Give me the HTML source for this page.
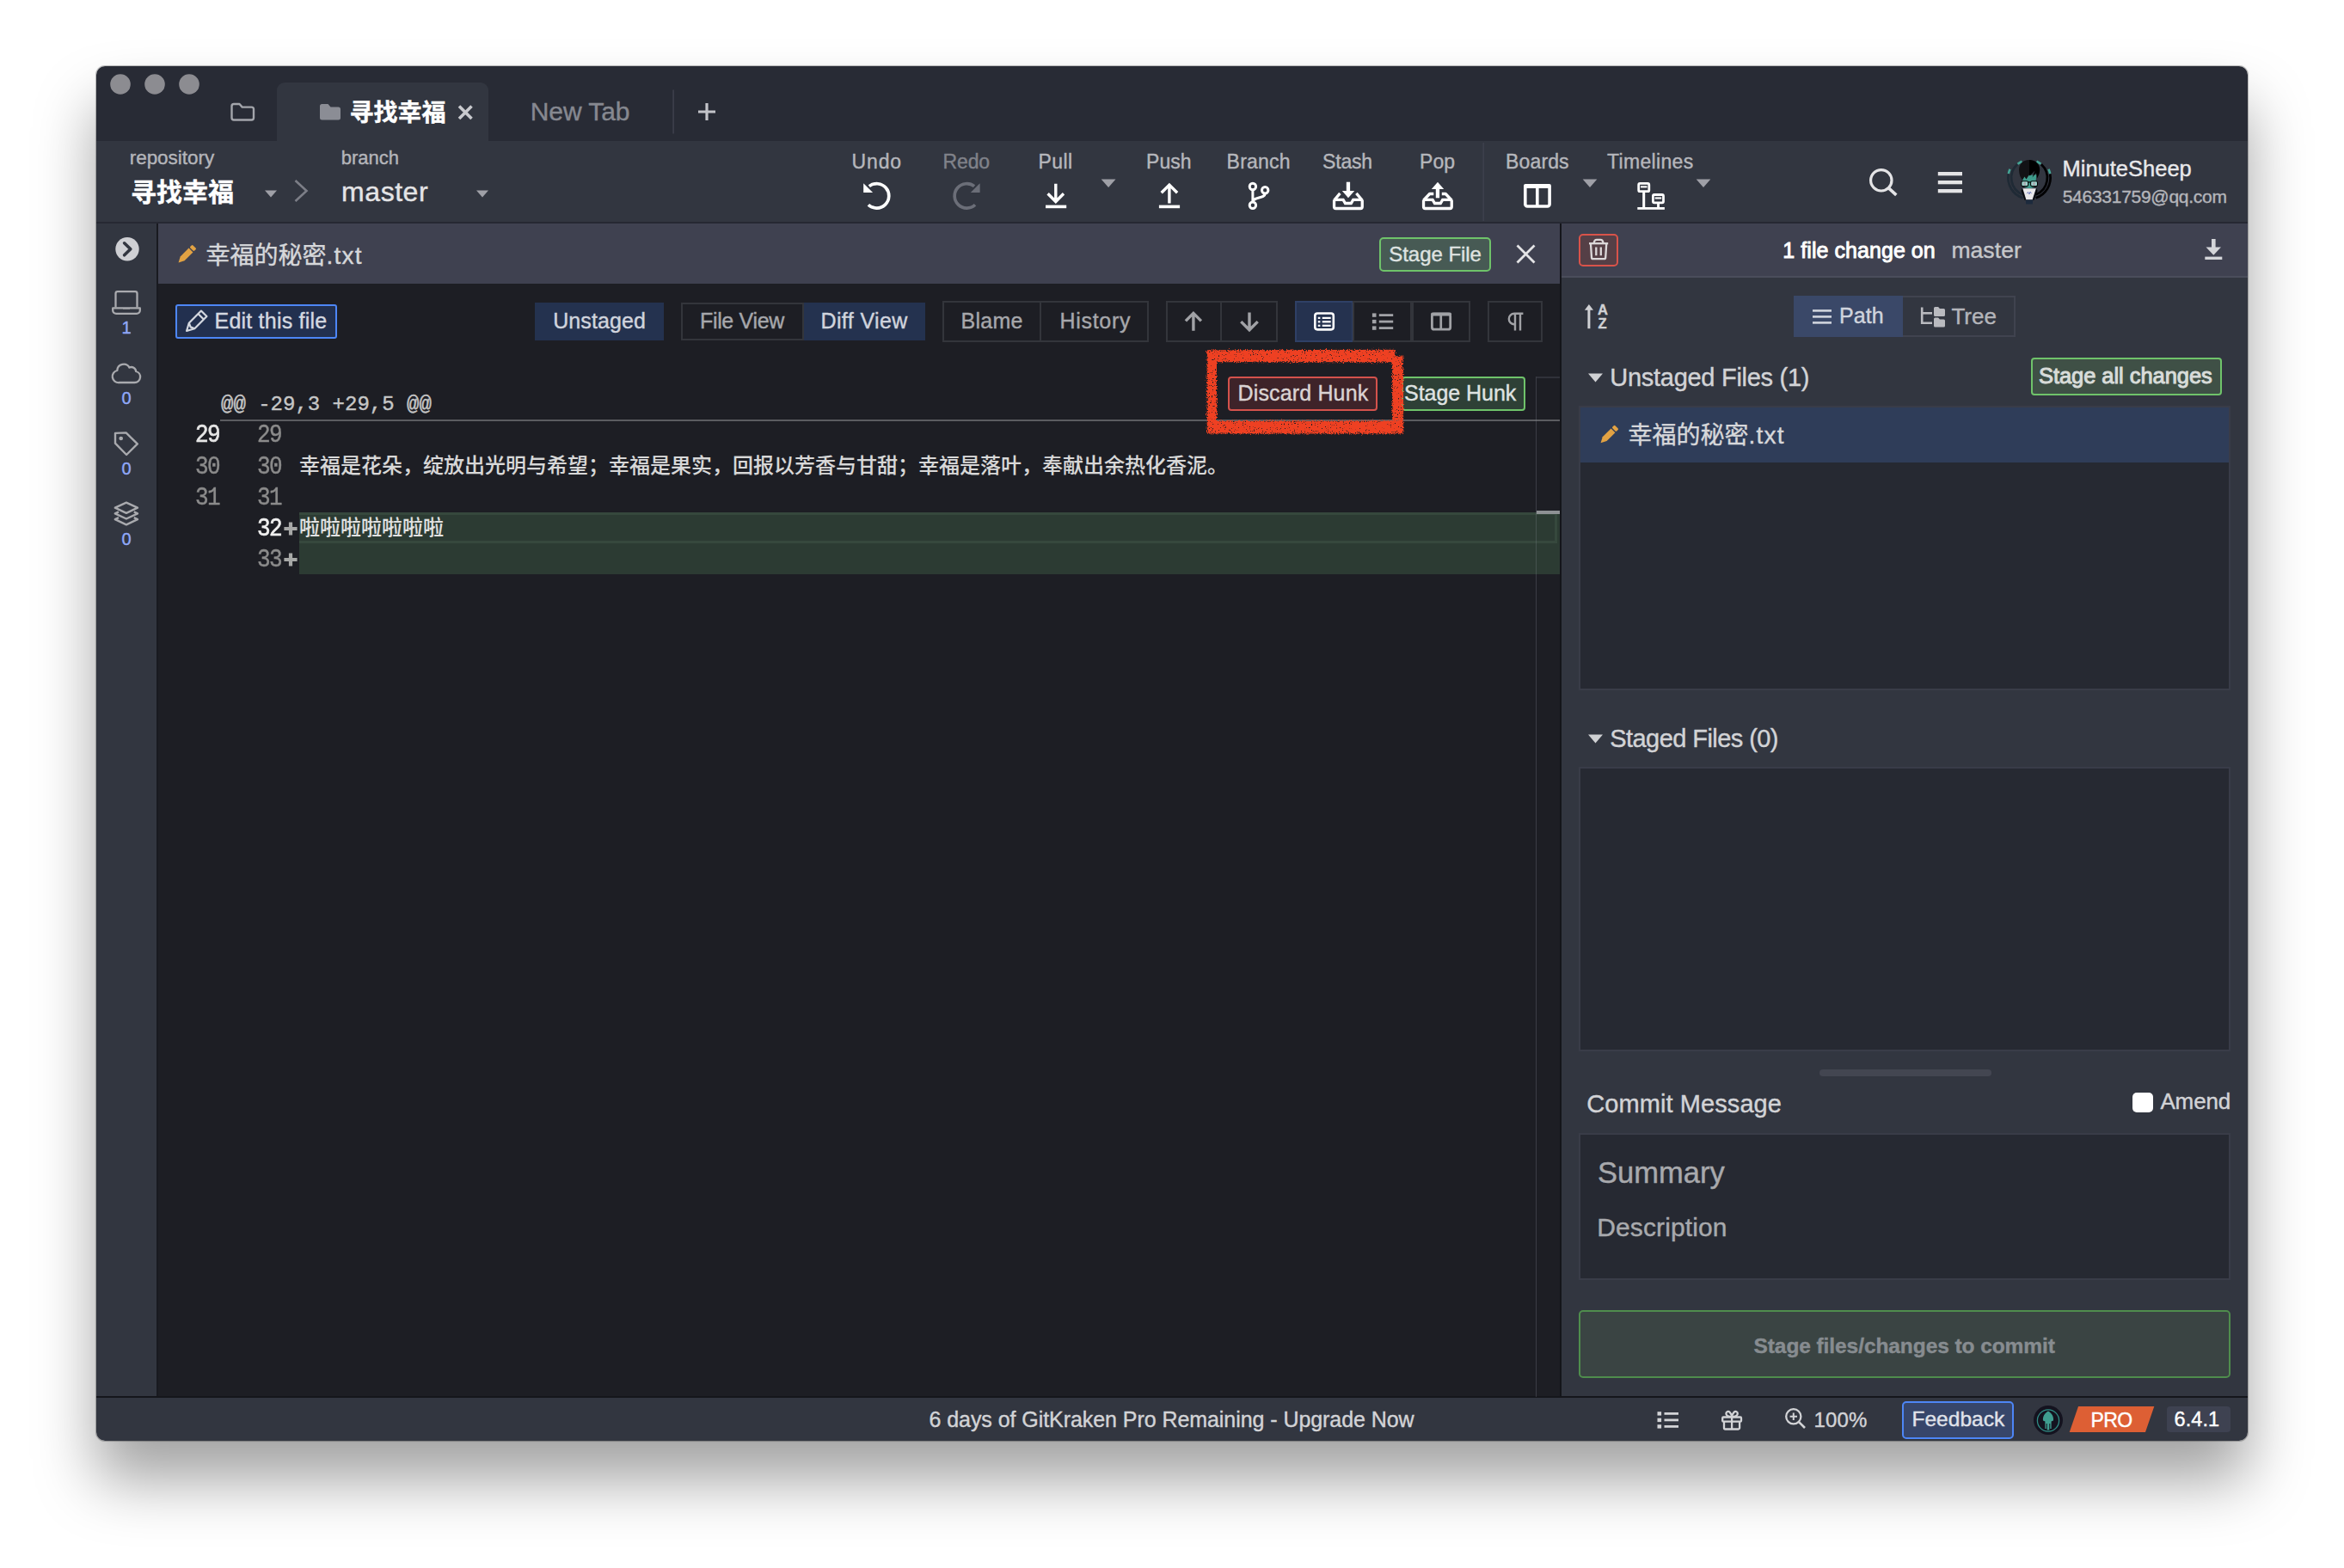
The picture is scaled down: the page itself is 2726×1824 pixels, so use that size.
<!DOCTYPE html>
<html lang="zh">
<head>
<meta charset="utf-8">
<title>GitKraken - 寻找幸福</title>
<style>
html,body{margin:0;padding:0;}
body{width:2726px;height:1824px;background:#fff;overflow:hidden;position:relative;
 font-family:"Liberation Sans","Noto Sans CJK SC",sans-serif;}
.abs,.win *{position:absolute;box-sizing:border-box;}
.shadow{left:112px;top:77px;width:2502px;height:1599px;border-radius:10px;
 box-shadow:0 0 0 1px rgba(0,0,0,.22),0 0 3px rgba(0,0,0,.10),0 46px 70px rgba(0,0,0,.365);}
.win{left:0;top:0;width:2726px;height:1824px;clip-path:inset(77px 112px 148px 112px round 10px);}
.t{white-space:pre;line-height:1;-webkit-text-stroke:0.4px;}
svg{overflow:visible;}
/* panels */
.tabbar{left:112px;top:77px;width:2502px;height:87px;background:#282b35;}
.tab{left:322px;top:96px;width:246px;height:68px;background:#323640;border-radius:9px 9px 0 0;}
.toolbar{left:112px;top:164px;width:2502px;height:94px;background:#323640;}
.tbline{left:112px;top:258px;width:2502px;height:2px;background:#262832;}
.side{left:112px;top:260px;width:70px;height:1365px;background:#323640;}
.sideline{left:182px;top:260px;width:2px;height:1365px;background:#191a20;}
.fhead{left:184px;top:260px;width:1630px;height:70px;background:#3f4150;}
.diff{left:184px;top:330px;width:1630px;height:1295px;background:#1d1e24;}
.midline{left:1814px;top:260px;width:2px;height:1365px;background:#14151a;}
.right{left:1816px;top:260px;width:798px;height:1365px;background:#323640;}
.rhead{left:1816px;top:260px;width:798px;height:61px;background:#3f4150;}
.rheadline{left:1816px;top:321px;width:798px;height:2px;background:#4a4d5b;}
.status{left:112px;top:1626px;width:2502px;height:50px;background:#323640;}
.statusline{left:112px;top:1624px;width:2502px;height:2px;background:#15161b;}
</style>
</head>
<body>
<div class="abs shadow"></div>
<div class="abs win">
<!-- backgrounds -->
<div class="tabbar"></div>
<div class="tab"></div>
<div class="toolbar"></div>
<div class="tbline"></div>
<div class="side"></div>
<div class="sideline"></div>
<div class="fhead"></div>
<div class="diff"></div>
<div class="midline"></div>
<div class="right"></div>
<div class="rhead"></div>
<div class="rheadline"></div>
<div class="statusline"></div>
<div class="status"></div>
<!-- tab bar -->
<svg style="left:112px;top:77px" width="2502" height="87" viewBox="112 77 2502 87" ><circle cx="140" cy="98" r="11.8" fill="#8c8c91"/><circle cx="180" cy="98" r="11.8" fill="#8c8c91"/><circle cx="220" cy="98" r="11.8" fill="#8c8c91"/><path d="M269.5 123.5 a2.5 2.5 0 0 1 2.5 -2.5 h6.5 l3.2 3.6 h10.8 a2.5 2.5 0 0 1 2.5 2.5 v9.9 a2.5 2.5 0 0 1 -2.5 2.5 h-20.5 a2.5 2.5 0 0 1 -2.5 -2.5 z" fill="none" stroke="#a3a5ab" stroke-width="2.4" stroke-linejoin="round"/><path d="M372 123.5 a2.5 2.5 0 0 1 2.5 -2.5 h7 l3 3.5 h9 a2.5 2.5 0 0 1 2.5 2.5 v10 a2.5 2.5 0 0 1 -2.5 2.5 h-19 a2.5 2.5 0 0 1 -2.5 -2.5 z" fill="#8b8d95"/><path d="M534 123.5 L548.5 138 M548.5 123.5 L534 138" stroke="#c9cace" stroke-width="3.6" fill="none"/><rect x="782.3" y="104.5" width="1.6" height="51" fill="#3d404c"/><path d="M822 120 V140 M812 130 H832" stroke="#c3c4c9" stroke-width="3.2" fill="none"/></svg>
<span class="t" style="left:406.5px;top:117.6px;font-size:28px;color:#ffffff;font-weight:700;">寻找幸福</span>
<span class="t" style="left:616.7px;top:114.6px;font-size:30.0px;color:#868890;letter-spacing:-0.06px;">New Tab</span>
<!-- toolbar -->
<span class="t" style="left:150.7px;top:173.0px;font-size:22.5px;color:#b4b5ba;letter-spacing:-0.03px;">repository</span>
<span class="t" style="left:152.0px;top:208.6px;font-size:30px;color:#ffffff;font-weight:700;">寻找幸福</span>
<span class="t" style="left:396.7px;top:173.4px;font-size:22.0px;color:#b4b5ba;letter-spacing:0.03px;">branch</span>
<span class="t" style="left:397.1px;top:206.9px;font-size:32.0px;color:#e4e4e6;letter-spacing:0.54px;">master</span>
<span class="t" style="left:990.6px;top:176.5px;font-size:23.0px;color:#b6b7bc;letter-spacing:0.85px;">Undo</span>
<span class="t" style="left:1096.6px;top:176.5px;font-size:23.0px;color:#80828a;letter-spacing:-0.15px;">Redo</span>
<span class="t" style="left:1207.6px;top:176.5px;font-size:23.0px;color:#b6b7bc;letter-spacing:0.39px;">Pull</span>
<span class="t" style="left:1333.1px;top:176.5px;font-size:23.0px;color:#b6b7bc;letter-spacing:0.03px;">Push</span>
<span class="t" style="left:1426.6px;top:176.5px;font-size:23.0px;color:#b6b7bc;letter-spacing:0.23px;">Branch</span>
<span class="t" style="left:1538.1px;top:176.5px;font-size:23.0px;color:#b6b7bc;letter-spacing:-0.20px;">Stash</span>
<span class="t" style="left:1651.1px;top:176.5px;font-size:23.0px;color:#b6b7bc;letter-spacing:0.05px;">Pop</span>
<span class="t" style="left:1751.1px;top:176.5px;font-size:23.0px;color:#b6b7bc;letter-spacing:0.13px;">Boards</span>
<span class="t" style="left:1869.1px;top:176.5px;font-size:23.0px;color:#b6b7bc;letter-spacing:0.31px;">Timelines</span>
<span class="t" style="left:2398.5px;top:184.4px;font-size:25.5px;color:#e8e8ea;">MinuteSheep</span>
<span class="t" style="left:2398.7px;top:218.2px;font-size:21.0px;color:#b4b5ba;letter-spacing:-0.27px;">546331759@qq.com</span>
<svg style="left:112px;top:164px" width="2502" height="94" viewBox="112 164 2502 94" ><polygon points="308,221.5 322,221.5 315.0,229.5" fill="#9fa0a7"/><polygon points="554,221.5 568,221.5 561.0,229.5" fill="#9fa0a7"/><path d="M343.5 210 L356.5 222 L343.5 234" fill="none" stroke="#7c7e87" stroke-width="2.6"/><path d="M1010.81 216.66 A14.2 14.2 0 1 1 1009.87 238.24" fill="none" stroke="#ffffff" stroke-width="3.7"/><polygon points="1004.2,213.2 1004.2,224.1 1015.1,224.1" fill="#ffffff"/><path d="M1133.09 216.66 A14.2 14.2 0 1 0 1134.03 238.24" fill="none" stroke="#6b6e78" stroke-width="3.7"/><polygon points="1139.6,213.2 1139.6,224.1 1128.8,224.1" fill="#6b6e78"/><path d="M1227.8 213.8 V234 M1218.6 225.3 L1227.8 234.5 L1237 225.3" fill="none" stroke="#ffffff" stroke-width="3.4"/><rect x="1216" y="238.6" width="24.2" height="3.6" fill="#ffffff"/><polygon points="1280.7,208.6 1297.5,208.6 1289.1,218" fill="#9fa0a7"/><path d="M1359.9 236.4 V215.5 M1350.7 224.3 L1359.9 215.1 L1369.1 224.3" fill="none" stroke="#ffffff" stroke-width="3.4"/><rect x="1347.9" y="238.6" width="24.2" height="3.6" fill="#ffffff"/><g fill="none" stroke="#ffffff" stroke-width="3"><circle cx="1456.9" cy="217" r="3.7"/><circle cx="1471.2" cy="221.3" r="3.7"/><circle cx="1456.9" cy="238.8" r="3.7"/><path d="M1456.9 220.7 V235.1 M1471.2 225 C1471.2 231.5 1457.2 228.5 1456.9 235"/></g><g fill="none" stroke="#ffffff" stroke-width="3.3" stroke-linejoin="round"><path d="M1551.5500000000002 232.6 V240.5 a2 2 0 0 0 2 2 H1582.25 a2 2 0 0 0 2 -2 V232.6"/><path d="M1551.5500000000002 232.4 H1562.1000000000001 L1564.5 236.5 H1571.3000000000002 L1573.7 232.4 H1584.25" stroke-linejoin="miter"/><path d="M1551.5500000000002 233 L1558.4 224.9 M1584.25 233 L1577.4 224.9"/></g><rect x="1565.8" y="211.7" width="4.3" height="11" fill="#ffffff"/><polygon points="1560.8,222.1 1575.2,222.1 1568,230.3" fill="#ffffff"/><g fill="none" stroke="#ffffff" stroke-width="3.3" stroke-linejoin="round"><path d="M1655.5500000000002 232.6 V240.5 a2 2 0 0 0 2 2 H1686.25 a2 2 0 0 0 2 -2 V232.6"/><path d="M1655.5500000000002 232.4 H1666.1000000000001 L1668.5 236.5 H1675.3000000000002 L1677.7 232.4 H1688.25" stroke-linejoin="miter"/><path d="M1655.5500000000002 233 L1662.6000000000001 225.5 H1667.3000000000002 M1688.25 233 L1681.2 225.5 H1676.8000000000002"/></g><rect x="1669.8" y="219" width="4.3" height="11.3" fill="#ffffff"/><polygon points="1664.8,219.9 1679.2,219.9 1672,211.7" fill="#ffffff"/><rect x="1724.4" y="166" width="1.6" height="91" fill="#3d404c"/><rect x="1773.8" y="216" width="28.3" height="24" rx="2.5" fill="none" stroke="#ffffff" stroke-width="3.6"/><rect x="1772" y="214" width="31.9" height="5" rx="2" fill="#ffffff"/><rect x="1786" y="216" width="3.6" height="24" fill="#ffffff"/><polygon points="1840.7,208.6 1857.3,208.6 1849.0,218" fill="#9fa0a7"/><g fill="none" stroke="#ffffff" stroke-width="2.8"><rect x="1905.7" y="213.4" width="12.1" height="9.3" rx="1.5"/><rect x="1922.4" y="226.5" width="12.1" height="9.3" rx="1.5"/></g><g fill="#ffffff"><rect x="1908" y="216.3" width="7.5" height="2.1"/><rect x="1924.7" y="229.4" width="7.5" height="2.1"/><rect x="1910.2" y="224" width="3" height="17.5"/><rect x="1927.1" y="237" width="2.9" height="4.5"/><rect x="1904.3" y="241" width="31.6" height="2.8"/></g><polygon points="1972.7,208.6 1989.3,208.6 1981.0,218" fill="#9fa0a7"/><circle cx="2187.8" cy="209.8" r="12.2" fill="none" stroke="#e4e4e6" stroke-width="3.2"/><path d="M2196.8 219.2 L2205.3 226.9" stroke="#e4e4e6" stroke-width="3.6" fill="none"/><g fill="#e4e4e6"><rect x="2253.8" y="200" width="28.2" height="4.3"/><rect x="2253.8" y="210" width="28.2" height="4.3"/><rect x="2253.8" y="220" width="28.2" height="4.3"/></g><g><path d="M2335.77 202.53 A24.6 24.6 0 0 0 2352.40 230.20" fill="none" stroke="#1f2a35" stroke-width="2.7"/><path d="M2384.23 202.53 A24.6 24.6 0 0 1 2367.60 230.20" fill="none" stroke="#020203" stroke-width="2.7"/><path d="M2346.02 191.27 A20.9 20.9 0 0 0 2352.17 226.18" fill="none" stroke="#1f2a35" stroke-width="2.7"/><path d="M2373.98 191.27 A20.9 20.9 0 0 1 2367.83 226.18" fill="none" stroke="#020203" stroke-width="2.7"/><path d="M2335.85 202.11 A24.6 24.6 0 0 1 2337.53 196.79" fill="none" stroke="#44a596" stroke-width="2.6"/><path d="M2382.47 196.79 A24.6 24.6 0 0 1 2384.15 202.11" fill="none" stroke="#44a596" stroke-width="2.6"/><path d="M2346.57 190.79 A20.9 20.9 0 0 1 2351.50 187.71" fill="none" stroke="#44a596" stroke-width="2.6"/><path d="M2368.50 187.71 A20.9 20.9 0 0 1 2373.43 190.79" fill="none" stroke="#44a596" stroke-width="2.6"/><path d="M2351.6 205 L2353.2 216 C2355 220 2365 220 2366.8 216 L2368.6 203 Z" fill="#3f9c8c"/><path d="M2360 186 C2352 186 2348 191.5 2348 197.5 C2348 203 2350 207 2352 209.5 L2354.5 205.5 L2356.5 208.5 L2360 203 Z" fill="#121215"/><path d="M2360 186 C2368 186 2372.2 191.5 2372.2 197.5 C2372.2 201 2371 204 2369 207.5 L2368 201 L2363.5 206.5 L2366.5 198.5 L2360.5 204.5 L2360 203 Z" fill="#000"/><rect x="2350.8" y="210.8" width="7.9" height="5.8" rx="1.6" fill="#9fd8d2" stroke="#050505" stroke-width="1.1"/><rect x="2361.6" y="210.8" width="7.9" height="5.8" rx="1.6" fill="#9fd8d2" stroke="#050505" stroke-width="1.1"/><rect x="2358.4" y="211.3" width="3.4" height="1.2" fill="#050505"/><circle cx="2354.7" cy="213.7" r="1.7" fill="#a9a9ae"/><circle cx="2365.5" cy="213.7" r="1.7" fill="#a9a9ae"/><path d="M2352.4 219.3 L2367.8 219.3 L2363.6 232.3 L2356.4 232.3 Z" fill="#e9e9ea"/><path d="M2351.8 219 L2356 232.6 L2354.6 233 L2350.6 222 Z M2368.4 219 L2364 232.6 L2365.4 233 L2369.6 222 Z" fill="#07090c"/><path d="M2355.8 232.4 H2364.2 L2363.8 237.6 H2356.2 Z" fill="#1c2a3d"/><path d="M2357.2 225.2 L2358.6 223.4 L2360 226 L2361 223 L2362.6 225.2" fill="none" stroke="#4a59b0" stroke-width="0.7"/></g></svg>
<!-- sidebar -->
<svg style="left:112px;top:260px" width="70" height="400" viewBox="112 260 70 400" ><circle cx="148" cy="289.8" r="13.7" fill="#cfd0d4"/><path d="M144.6 282.8 L151.8 289.8 L144.6 296.8" fill="none" stroke="#323640" stroke-width="3.6" stroke-linecap="round" stroke-linejoin="round"/><g fill="none" stroke="#a9aaae" stroke-width="2.3" stroke-linejoin="round"><path d="M134.5 357.5 V341.5 a2.3 2.3 0 0 1 2.3 -2.3 h20.4 a2.3 2.3 0 0 1 2.3 2.3 V357.5"/><path d="M131.2 358.4 H162.8 V360.9 a3.9 3.9 0 0 1 -3.9 3.9 H135.1 a3.9 3.9 0 0 1 -3.9 -3.9 Z"/><path d="M143 358.8 H151" stroke-width="1.6"/></g><path d="M138.5 445 H156.5 a6.6 6.6 0 0 0 1.6 -13 a5.2 5.2 0 0 0 -7.6 -4.4 a7.6 7.6 0 0 0 -14.2 3.4 a7.1 7.1 0 0 0 2.2 14 Z" fill="none" stroke="#a9aaae" stroke-width="2.3" stroke-linejoin="round"/><path d="M134 503.9 L146.6 503.4 L159.8 516.4 L147.1 529 L134 515.7 Z" fill="none" stroke="#a9aaae" stroke-width="2.4" stroke-linejoin="round"/><circle cx="140.7" cy="510" r="2.3" fill="#a9aaae"/><g fill="none" stroke="#a9aaae" stroke-width="2.4" stroke-linejoin="round"><path d="M146.9 584.6 L160 590.7 L146.9 596.8 L133.8 590.7 Z"/><path d="M138 595.4 L133.8 597.4 L146.9 603.5 L160 597.4 L155.8 595.4"/><path d="M138 602.2 L133.8 604.2 L146.9 610.3 L160 604.2 L155.8 602.2"/></g></svg>
<span class="t" style="left:127px;width:40px;text-align:center;top:371.1px;font-size:20px;color:#90a8f8">1</span>
<span class="t" style="left:127px;width:40px;text-align:center;top:452.9px;font-size:20px;color:#90a8f8">0</span>
<span class="t" style="left:127px;width:40px;text-align:center;top:535.3px;font-size:20px;color:#90a8f8">0</span>
<span class="t" style="left:127px;width:40px;text-align:center;top:617.1px;font-size:20px;color:#90a8f8">0</span>
<!-- file header -->
<svg style="left:184px;top:260px" width="1630" height="70" viewBox="184 260 1630 70" ><g transform="translate(217 296) scale(0.9545454545454546) rotate(45)"><rect x="-3.6" y="-13.4" width="7.2" height="4.6" rx="1.3" fill="#e2a243"/><path d="M-3.6 -7.4 H3.6 V7.2 L0 14 L-3.6 7.2 Z" fill="#e2a243"/></g><path d="M1764.5 285.5 L1784.5 305.5 M1784.5 285.5 L1764.5 305.5" stroke="#e4e4e6" stroke-width="2.8" fill="none"/></svg>
<span class="t" style="left:239.5px;top:284.0px;font-size:28px;color:#d6d7da;">幸福的秘密<span style="position:static;letter-spacing:1.2px">.txt</span></span>
<div style="left:1604px;top:276px;width:130px;height:40px;border:2px solid #6fc36a;border-radius:5px;background:#475a54"></div>
<span class="t" style="left:1615.3px;top:283.7px;font-size:24.0px;color:#dfe3e1;letter-spacing:-0.05px;">Stage File</span>
<!-- diff toolbar -->
<div style="left:204px;top:354px;width:188px;height:40px;border:2px solid #4d86f6;border-radius:3px;background:#22304f"></div>
<span class="t" style="left:249.5px;top:361.3px;font-size:25.0px;color:#d4d8e0;letter-spacing:0.22px;">Edit this file</span>
<div style="left:622px;top:352px;width:150px;height:44px;background:#24324f"></div>
<span class="t" style="left:643.2px;top:360.8px;font-size:25.0px;color:#d0d4dd;letter-spacing:0.10px;">Unstaged</span>
<div style="left:792px;top:352px;width:143px;height:44px;border:2px solid #33353b"></div>
<div style="left:935px;top:352px;width:141px;height:44px;background:#24324f"></div>
<span class="t" style="left:814.0px;top:360.8px;font-size:25.0px;color:#a6a7ab;letter-spacing:-0.34px;">File View</span>
<span class="t" style="left:954.5px;top:360.8px;font-size:25.0px;color:#d0d4dd;letter-spacing:0.38px;">Diff View</span>
<div style="left:1096px;top:350px;width:115px;height:48px;border:2px solid #33353b"></div>
<div style="left:1209px;top:350px;width:127px;height:48px;border:2px solid #33353b"></div>
<span class="t" style="left:1117.5px;top:360.8px;font-size:25.0px;color:#a6a7ab;letter-spacing:0.28px;">Blame</span>
<span class="t" style="left:1232.5px;top:360.8px;font-size:25.0px;color:#a6a7ab;letter-spacing:0.70px;">History</span>
<div style="left:1356px;top:350px;width:65px;height:48px;border:2px solid #33353b"></div>
<div style="left:1419px;top:350px;width:67px;height:48px;border:2px solid #33353b"></div>
<div style="left:1506px;top:350px;width:68px;height:48px;border:2px solid #2f4066;background:#25324f"></div>
<div style="left:1573px;top:350px;width:69px;height:48px;border:2px solid #33353b"></div>
<div style="left:1642px;top:350px;width:68px;height:48px;border:2px solid #33353b"></div>
<div style="left:1730px;top:350px;width:64px;height:48px;border:2px solid #33353b"></div>
<svg style="left:184px;top:340px" width="1630" height="70" viewBox="184 340 1630 70" ><g transform="translate(228 374) rotate(45)" fill="none" stroke="#d4d8e0" stroke-width="2.2" stroke-linejoin="round"><path d="M-4.6 -13 H4.6 V7 L0 15.5 L-4.6 7 Z"/><path d="M-4.6 -8 H4.6"/><path d="M-4.6 7 L0 9 L4.6 7" /></g><path d="M1387.9 384.7 V365 M1378.9 373.4 L1387.9 364.4 L1396.9 373.4" fill="none" stroke="#a1a2a6" stroke-width="3.4"/><path d="M1453 363.5 V383.2 M1443.3 374.1 L1453 383.8 L1462.7 374.1" fill="none" stroke="#a1a2a6" stroke-width="3.4"/><rect x="1529.3" y="364.5" width="21.5" height="18.9" rx="2.8" fill="none" stroke="#fff" stroke-width="2.6"/><rect x="1532.8" y="368.79999999999995" width="2.6" height="2.2" fill="#fff"/><rect x="1537.7" y="368.79999999999995" width="10" height="2.2" fill="#fff"/><rect x="1532.8" y="373.2" width="2.6" height="2.2" fill="#fff"/><rect x="1537.7" y="373.2" width="10" height="2.2" fill="#fff"/><rect x="1532.8" y="377.7" width="2.6" height="2.2" fill="#fff"/><rect x="1537.7" y="377.7" width="10" height="2.2" fill="#fff"/><rect x="1595.9" y="364.40000000000003" width="4.6" height="4.4" fill="#a1a2a6"/><rect x="1603.8" y="365.20000000000005" width="16.4" height="2.8" fill="#a1a2a6"/><rect x="1595.9" y="371.90000000000003" width="4.6" height="4.4" fill="#a1a2a6"/><rect x="1603.8" y="372.70000000000005" width="16.4" height="2.8" fill="#a1a2a6"/><rect x="1595.9" y="379.40000000000003" width="4.6" height="4.4" fill="#a1a2a6"/><rect x="1603.8" y="380.20000000000005" width="16.4" height="2.8" fill="#a1a2a6"/><rect x="1665.4" y="365.2" width="21.3" height="18" rx="2.5" fill="none" stroke="#a1a2a6" stroke-width="2.8"/><rect x="1664" y="363.4" width="24.1" height="4.2" rx="2" fill="#a1a2a6"/><rect x="1674.4" y="365" width="2.7" height="18" fill="#a1a2a6"/><path d="M1762 384.6 V365 M1768 384.6 V365 M1771.4 364.8 H1761 a6.2 6.2 0 0 0 0 12.4 H1762" fill="none" stroke="#a1a2a6" stroke-width="2.4"/></svg>
<!-- diff content -->
<div style="left:348px;top:596px;width:1466px;height:72px;background:#2c3b33"></div>
<div style="left:348px;top:596px;width:1463px;height:36px;border:3px solid #36483d;border-left:none;"></div>
<div style="left:256px;top:488px;width:1558px;height:2px;background:#5b5c60"></div>
<div style="left:1786px;top:438px;width:1.4px;height:1187px;background:rgba(130,135,145,.30)"></div>
<div style="left:1787px;top:438px;width:27px;height:2px;background:rgba(120,125,135,.22)"></div>
<div style="left:1787px;top:594px;width:27px;height:4px;background:#8e9194"></div>
<span class="t" style="left:257.0px;top:458.6px;font-size:24px;color:#c6c6c6;font-family:'Liberation Mono','Noto Sans CJK SC',monospace;">@@ -29,3 +29,5 @@</span>
<span class="t" style="left:227.0px;top:493.6px;font-size:26px;color:#e6e6e6;letter-spacing:-1.60px;font-family:'Liberation Mono','Noto Sans CJK SC',monospace;transform:scaleY(1.11);transform-origin:0 76.66%;-webkit-text-stroke:0.55px;">29</span>
<span class="t" style="left:299.0px;top:493.6px;font-size:26px;color:#8b8b8b;letter-spacing:-1.60px;font-family:'Liberation Mono','Noto Sans CJK SC',monospace;transform:scaleY(1.11);transform-origin:0 76.66%;">29</span>
<span class="t" style="left:227.0px;top:530.6px;font-size:26px;color:#8b8b8b;letter-spacing:-1.60px;font-family:'Liberation Mono','Noto Sans CJK SC',monospace;transform:scaleY(1.11);transform-origin:0 76.66%;">30</span>
<span class="t" style="left:299.0px;top:530.6px;font-size:26px;color:#8b8b8b;letter-spacing:-1.60px;font-family:'Liberation Mono','Noto Sans CJK SC',monospace;transform:scaleY(1.11);transform-origin:0 76.66%;">30</span>
<span class="t" style="left:348.0px;top:532.1px;font-size:24px;color:#d8d8d8;font-weight:500;font-family:'Liberation Mono','Noto Sans CJK SC',monospace;-webkit-text-stroke:0.1px;">幸福是花朵，绽放出光明与希望；幸福是果实，回报以芳香与甘甜；幸福是落叶，奉献出余热化香泥。</span>
<span class="t" style="left:227.0px;top:566.6px;font-size:26px;color:#8b8b8b;letter-spacing:-1.60px;font-family:'Liberation Mono','Noto Sans CJK SC',monospace;transform:scaleY(1.11);transform-origin:0 76.66%;">31</span>
<span class="t" style="left:299.0px;top:566.6px;font-size:26px;color:#8b8b8b;letter-spacing:-1.60px;font-family:'Liberation Mono','Noto Sans CJK SC',monospace;transform:scaleY(1.11);transform-origin:0 76.66%;">31</span>
<span class="t" style="left:299.0px;top:602.6px;font-size:26px;color:#f0f0f0;letter-spacing:-1.60px;font-family:'Liberation Mono','Noto Sans CJK SC',monospace;transform:scaleY(1.11);transform-origin:0 76.66%;-webkit-text-stroke:0.55px;">32</span>
<span class="t" style="left:348.0px;top:604.1px;font-size:24px;color:#e2e2e2;font-weight:500;font-family:'Liberation Mono','Noto Sans CJK SC',monospace;-webkit-text-stroke:0.1px;">啦啦啦啦啦啦啦</span>
<svg style="left:330px;top:607px" width="16" height="16" viewBox="0 0 16 16"><path d="M8 0.4 V15.6 M0.4 8 H15.6" stroke="#a7a8a7" stroke-width="4.2"/></svg>
<span class="t" style="left:299.0px;top:638.6px;font-size:26px;color:#8b8b8b;letter-spacing:-1.60px;font-family:'Liberation Mono','Noto Sans CJK SC',monospace;transform:scaleY(1.11);transform-origin:0 76.66%;">33</span>
<svg style="left:330px;top:643px" width="16" height="16" viewBox="0 0 16 16"><path d="M8 0.4 V15.6 M0.4 8 H15.6" stroke="#a7a8a7" stroke-width="4.2"/></svg>
<div style="left:1630px;top:438px;width:144px;height:40px;border:2px solid #6fc36a;border-radius:4px;background:#2e4036"></div>
<span class="t" style="left:1633.0px;top:444.8px;font-size:25.0px;color:#dfe3e1;letter-spacing:-0.04px;">Stage Hunk</span>
<div style="left:1428px;top:438px;width:174px;height:40px;border:2px solid #d4524c;border-radius:4px;background:#3e2329"></div>
<span class="t" style="left:1439.5px;top:444.8px;font-size:25.0px;color:#dad3d3;letter-spacing:0.15px;">Discard Hunk</span>
<svg style="left:1384px;top:390px" width="270" height="135" viewBox="1384 390 270 135">
<defs><filter id="rough" x="-10%" y="-10%" width="120%" height="120%"><feTurbulence type="fractalNoise" baseFrequency="0.85" numOctaves="2" seed="7" result="n"/><feDisplacementMap in="SourceGraphic" in2="n" scale="6" xChannelSelector="R" yChannelSelector="G" result="d"/><feTurbulence type="fractalNoise" baseFrequency="0.75" numOctaves="2" seed="11" result="n2"/><feColorMatrix in="n2" type="matrix" values="0 0 0 0 0  0 0 0 0 0  0 0 0 0 0  0 0 0 10 -6.6" result="holes"/><feComposite in="d" in2="holes" operator="out"/></filter></defs>
<g filter="url(#rough)"><path fill-rule="evenodd" fill="#ee4122" d="M1403.6 407.2 L1621.8 406.8 L1622.2 414.2 L1632 414.6 L1632.2 504.6 L1403.8 504.6 Z M1415 421.2 L1415 489.5 L1619.2 489.5 L1619 421.2 Z"/></g>
</svg>
<!-- right panel -->
<div style="left:1836px;top:272px;width:46px;height:38px;border:2px solid #d9534a;border-radius:5px;background:#553f46"></div>
<svg style="left:1817px;top:260px" width="797" height="140" viewBox="1817 260 797 140" ><g fill="none" stroke="#dcd8da" stroke-width="2.3" stroke-linejoin="round"><path d="M1848 283.2 H1870.2"/><path d="M1853.6 283 C1854 279.5 1855.5 278.9 1857 278.9 H1861.2 C1862.7 278.9 1864.2 279.5 1864.6 283"/><path d="M1850 284 L1851 299.6 a1.6 1.6 0 0 0 1.6 1.5 H1865.6 a1.6 1.6 0 0 0 1.6 -1.5 L1868.2 284"/><path d="M1856.3 287.6 V297.3 M1861.8 287.6 V297.3"/></g><rect x="2572" y="278" width="4.6" height="10" fill="#d4d5d9"/><polygon points="2565.5,287.5 2583,287.5 2574.3,296.8" fill="#d4d5d9"/><rect x="2564.3" y="298.6" width="20" height="3.4" fill="#d4d5d9"/><rect x="1846.4" y="359" width="3" height="23.2" fill="#d0d1d4"/><polygon points="1842.9,360.8 1853,360.8 1847.9,354.1" fill="#d0d1d4"/></svg>
<span class="t" style="left:1858.1px;top:351.6px;font-size:16.5px;color:#d0d1d4;font-weight:700;">A</span>
<span class="t" style="left:1858.6px;top:367.8px;font-size:16.5px;color:#d0d1d4;font-weight:700;">Z</span>
<span class="t" style="left:2073.3px;top:278.8px;font-size:25.0px;color:#ffffff;letter-spacing:0.06px;-webkit-text-stroke:0.9px #fff;">1 file change on</span>
<span class="t" style="left:2269.4px;top:277.6px;font-size:26.5px;color:#c6c7cb;letter-spacing:0.08px;">master</span>
<div style="left:2086px;top:344px;width:127px;height:48px;background:#3a4868"></div>
<div style="left:2213px;top:344px;width:131px;height:48px;border:2px solid #40434f;border-left:none"></div>
<svg style="left:2086px;top:344px" width="260" height="48" viewBox="2086 344 260 48" ><rect x="2108" y="360.09999999999997" width="22" height="2.6" fill="#d0d4dd"/><rect x="2108" y="367.09999999999997" width="22" height="2.6" fill="#d0d4dd"/><rect x="2108" y="374.09999999999997" width="22" height="2.6" fill="#d0d4dd"/><path d="M2235.2 357.5 V375.7 H2247" fill="none" stroke="#b9babf" stroke-width="2.6"/><path d="M2235.2 364.3 H2247" fill="none" stroke="#b9babf" stroke-width="2.6"/><path d="M2249 358.6 a1.5 1.5 0 0 1 1.5 -1.5 h3.6 l1.8 2 h4.6 a1.5 1.5 0 0 1 1.5 1.5 v6 a1.5 1.5 0 0 1 -1.5 1.5 h-10 a1.5 1.5 0 0 1 -1.5 -1.5 z" fill="#b9babf"/><path d="M2249 371.1 a1.5 1.5 0 0 1 1.5 -1.5 h3.6 l1.8 2 h4.6 a1.5 1.5 0 0 1 1.5 1.5 v6 a1.5 1.5 0 0 1 -1.5 1.5 h-10 a1.5 1.5 0 0 1 -1.5 -1.5 z" fill="#b9babf"/></svg>
<span class="t" style="left:2139.0px;top:355.3px;font-size:25.0px;color:#d0d4dd;letter-spacing:0.10px;">Path</span>
<span class="t" style="left:2269.4px;top:354.5px;font-size:26.0px;color:#b4b5ba;letter-spacing:0.04px;">Tree</span>
<svg style="left:1840px;top:420px" width="40" height="40" viewBox="1840 420 40 40" ><polygon points="1847,434.5 1864,434.5 1855.5,444.5" fill="#d0d1d4"/></svg>
<span class="t" style="left:1872.3px;top:424.5px;font-size:29.0px;color:#d2d3d6;letter-spacing:-0.28px;">Unstaged Files (1)</span>
<div style="left:2362px;top:416px;width:222px;height:44px;border:2px solid #6fc36a;border-radius:4px;background:#3f5046"></div>
<span class="t" style="left:2371.0px;top:425.0px;font-size:25.5px;color:#d8dcd9;letter-spacing:-0.06px;-webkit-text-stroke:1px #d8dcd9;">Stage all changes</span>
<div style="left:1836px;top:472px;width:758px;height:331px;background:#262932;border:2px solid #393c48"></div>
<div style="left:1838px;top:474px;width:754px;height:64px;background:#2f3d59"></div>
<svg style="left:1855px;top:490px" width="32" height="32" viewBox="1855 490 32 32" ><g transform="translate(1871 505.8) scale(0.9545454545454546) rotate(45)"><rect x="-3.6" y="-13.4" width="7.2" height="4.6" rx="1.3" fill="#e2a243"/><path d="M-3.6 -7.4 H3.6 V7.2 L0 14 L-3.6 7.2 Z" fill="#e2a243"/></g></svg>
<span class="t" style="left:1893.5px;top:493.3px;font-size:28px;color:#d6d7da;">幸福的秘密<span style="position:static;letter-spacing:1.2px">.txt</span></span>
<svg style="left:1840px;top:840px" width="40" height="40" viewBox="1840 840 40 40" ><polygon points="1847,854.5 1864,854.5 1855.5,864.5" fill="#d0d1d4"/></svg>
<span class="t" style="left:1872.3px;top:844.5px;font-size:29.0px;color:#d2d3d6;letter-spacing:-0.57px;">Staged Files (0)</span>
<div style="left:1836px;top:892px;width:758px;height:331px;background:#262932;border:2px solid #393c48"></div>
<div style="left:2116px;top:1244px;width:200px;height:8px;border-radius:4px;background:#434651"></div>
<span class="t" style="left:1845.3px;top:1270.0px;font-size:29.0px;color:#d2d3d6;letter-spacing:0.08px;">Commit Message</span>
<div style="left:2480px;top:1270.5px;width:24px;height:23.5px;border-radius:5px;background:#ffffff"></div>
<span class="t" style="left:2512.4px;top:1268.0px;font-size:26.0px;color:#d2d3d6;letter-spacing:-0.13px;">Amend</span>
<div style="left:1836px;top:1318px;width:758px;height:171px;background:#262932;border:2px solid #393c48"></div>
<span class="t" style="left:1857.9px;top:1346.8px;font-size:34.5px;color:#a8a9ad;letter-spacing:0.03px;">Summary</span>
<span class="t" style="left:1857.2px;top:1412.6px;font-size:30.0px;color:#a8a9ad;letter-spacing:0.12px;">Description</span>
<div style="left:1836px;top:1524px;width:758px;height:79px;border:2px solid #4f8d4d;border-radius:5px;background:#3a4443"></div>
<span class="t" style="left:2039.5px;top:1553.8px;font-size:24.5px;color:#878c90;letter-spacing:-0.08px;font-weight:700;">Stage files/changes to commit</span>
<!-- status bar -->
<span class="t" style="left:1080.5px;top:1638.8px;font-size:25.0px;color:#d2d3d6;letter-spacing:-0.06px;">6 days of GitKraken Pro Remaining - Upgrade Now</span>
<svg style="left:1900px;top:1626px" width="714" height="50" viewBox="1900 1626 714 50" ><rect x="1927.5" y="1642.2" width="4.6" height="4.4" fill="#d2d3d6"/><rect x="1935.5" y="1643.0" width="16.5" height="2.8" fill="#d2d3d6"/><rect x="1927.5" y="1649.7" width="4.6" height="4.4" fill="#d2d3d6"/><rect x="1935.5" y="1650.5" width="16.5" height="2.8" fill="#d2d3d6"/><rect x="1927.5" y="1657.2" width="4.6" height="4.4" fill="#d2d3d6"/><rect x="1935.5" y="1658.0" width="16.5" height="2.8" fill="#d2d3d6"/><g fill="none" stroke="#d2d3d6" stroke-width="2.3" stroke-linejoin="round"><rect x="2003.2" y="1648.5" width="21.8" height="5.2" rx="1"/><path d="M2005 1653.7 V1661 a1.5 1.5 0 0 0 1.5 1.5 H2021.6 a1.5 1.5 0 0 0 1.5 -1.5 V1653.7"/><path d="M2014.1 1648.5 V1662.5"/><path d="M2014.1 1648 C2010 1648 2007.4 1646.4 2007.4 1644.2 C2007.4 1641.8 2010.2 1641.2 2011.8 1643 C2013 1644.4 2014.1 1646.5 2014.1 1648 C2014.1 1646.5 2015.2 1644.4 2016.4 1643 C2018 1641.2 2020.8 1641.8 2020.8 1644.2 C2020.8 1646.4 2018.2 1648 2014.1 1648 Z"/></g><circle cx="2085.8" cy="1647.8" r="8.6" fill="none" stroke="#d2d3d6" stroke-width="2.3"/><path d="M2092.3 1654.3 L2099 1661" stroke="#d2d3d6" stroke-width="2.6"/><path d="M2085.8 1643.6 V1652 M2081.6 1647.8 H2090" stroke="#d2d3d6" stroke-width="2"/><circle cx="2382" cy="1652" r="17" fill="#14131f"/><circle cx="2382" cy="1652.5" r="12.6" fill="none" stroke="#2f8d85" stroke-width="1.3"/><path d="M2382 1641.5 C2386.5 1644 2388.5 1648 2388 1652.5 L2385.6 1653.5 V1662 H2384.3 V1656 H2383.3 V1663.5 H2380.7 V1656 H2379.7 V1662 H2378.4 V1653.5 L2376 1652.5 C2375.5 1648 2377.5 1644 2382 1641.5 Z" fill="#3f9e90"/><polygon points="2417,1636 2505.3,1636 2495,1666 2406.7,1666" fill="#dd5f34"/><rect x="2520" y="1636" width="74" height="30" rx="4" fill="#3e4251"/></svg>
<span class="t" style="left:2109.6px;top:1639.7px;font-size:24.0px;color:#d2d3d6;letter-spacing:0.08px;">100%</span>
<div style="left:2212px;top:1630px;width:130px;height:44px;border:2px solid #4d86f6;border-radius:5px;background:#37466a"></div>
<span class="t" style="left:2223.5px;top:1639.3px;font-size:24.5px;color:#e0e3ea;letter-spacing:0.01px;">Feedback</span>
<span class="t" style="left:2431.6px;top:1640.5px;font-size:23.0px;color:#ffffff;letter-spacing:-0.66px;">PRO</span>
<span class="t" style="left:2528.6px;top:1640.1px;font-size:23.5px;color:#ffffff;letter-spacing:0.08px;">6.4.1</span>
</div>
</body>
</html>
